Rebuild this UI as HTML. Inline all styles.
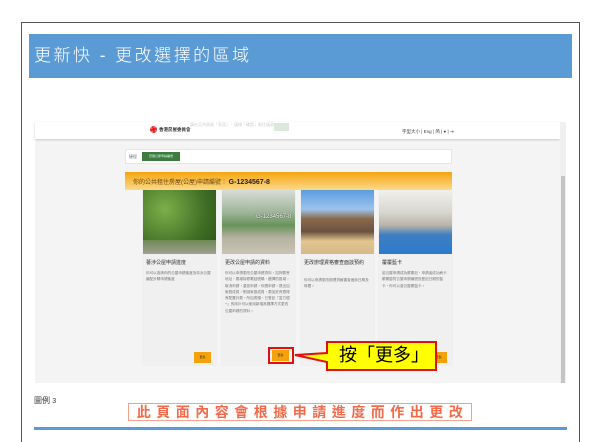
<!DOCTYPE html>
<html><head><meta charset="utf-8"><style>
*{margin:0;padding:0;box-sizing:border-box}
body{width:600px;height:432px;background:#fff;position:relative;overflow:hidden;font-family:"Liberation Sans","Noto Sans CJK TC",sans-serif}
.a{position:absolute}
.t{font-family:"Liberation Sans","Noto Sans CJK TC",sans-serif;white-space:nowrap}
.card{position:absolute;top:190px;width:73px;height:175px;background:#f0f0f0;box-shadow:0 0 1px #ddd}
.img{height:64px;width:100%}
.ct{position:absolute;left:3px;top:70px;font-size:5px;color:#333;width:66px;line-height:7px}
.cb{position:absolute;left:3px;top:80px;font-size:3.6px;color:#777;width:66px;line-height:6.3px}
.btn{position:absolute;width:17px;height:11px;background:#f5a20a;font-size:3px;color:#333;text-align:center;line-height:11px}
</style></head><body>
<div class="a" style="left:21px;top:22px;width:559px;height:420px;border:1px solid #555;border-bottom:none"></div>
<div class="a t" style="left:29px;top:34px;width:543px;height:44px;background:#5b9bd5;color:#fff;font-size:17px;letter-spacing:2.5px;line-height:44px;padding-left:5px;font-weight:300">更新快 - 更改選擇的區域</div>

<div class="a" style="left:35px;top:122px;width:531px;height:261px;background:#f4f4f4"></div>
<div class="a" style="left:35px;top:122px;width:525px;height:17px;background:#fff;box-shadow:0 1px 2px #ccc"></div>
<div class="a" style="left:560px;top:122px;width:6px;height:261px;background:#f0f0f0"></div>
<div class="a" style="left:561px;top:176px;width:4px;height:207px;background:#c4c4c4"></div>
<div class="a" style="left:150px;top:126px;width:7px;height:7px;border-radius:50%;background:#e02020;border:2px dotted #f66"></div>
<div class="a t" style="left:159px;top:127px;font-size:4.5px;color:#333;font-weight:bold">香港房屋委員會</div>
<div class="a t" style="left:190px;top:122px;font-size:4px;color:#ccc">請在公共房屋「家居」、請按「確認」前往填寫。</div>
<div class="a" style="left:274px;top:123px;width:15px;height:8px;background:#dde8dd"></div>
<div class="a t" style="left:402px;top:129px;font-size:4.5px;color:#444">字型大小 | Eng | 简 | <b>●</b> | ⇥</div>
<div class="a" style="left:125px;top:149px;width:327px;height:15px;background:#fff;border:1px solid #e6e6e6"></div>
<div class="a t" style="left:129px;top:154px;font-size:4px;color:#666">捷徑</div>
<div class="a" style="left:142px;top:152px;width:38px;height:9px;background:#3f7a3f;font-size:3px;color:#cfe;text-align:center;line-height:9px">管理公屋申請編號</div>
<div class="a" style="left:125px;top:172px;width:327px;height:18px;background:linear-gradient(#f6a510,#fbd98a)"></div>
<div class="a t" style="left:133px;top:177px;font-size:6px;color:#6b4a10">你的公共租住房屋(公屋)申請編號： <b style="font-size:7px;color:#222">G-1234567-8</b></div>

<div class="card" style="left:143px"><div class="img" style="background:radial-gradient(circle at 30% 30%,#7caf4a,#3f6e25 60%,#2c5018);position:relative"><div class="a" style="left:0;bottom:0;width:100%;height:14px;background:linear-gradient(#6c8a55,#a0a090)"></div></div>
<div class="ct">蕃涉公屋申請進度</div><div class="cb">你可以查詢你的公屋申請進度及待派公屋編配步驟申請進度</div><div class="btn" style="left:51px;top:162px">更多</div></div>
<div class="card" style="left:222px"><div class="img" style="background:linear-gradient(#d9dcd7 0%,#9eb59a 35%,#68935a 55%,#b6b3a4 75%,#c9c3b3);position:relative"><div class="a t" style="left:34px;top:24px;font-size:6px;color:#fff;text-shadow:0 0 1px #000">G-1234567-8</div></div>
<div class="ct">更改公屋申請的資料</div><div class="cb">你可以申請更改公屋申請資料，如押要會地址，要增除修電話號碼，續擇的區域，取消申請，重信申請，你透申請，提出加家庭成員，刪減家庭成員，要加死有適得有配置計劃，所加書譜，已登記「富方優+」的用戶可以使用新增其選擇方式更改公屋申請的資料。</div>
<div class="a" style="left:46px;top:157px;width:26px;height:17px;border:2px solid #e01010"></div><div class="btn" style="left:50px;top:160px">更多</div></div>
<div class="card" style="left:301px"><div class="img" style="background:linear-gradient(#5c9ce0 0%,#9cc4ec 30%,#8a6a4a 45%,#6a5140 65%,#e2c78e 80%,#d5b98a)"></div>
<div class="ct">更改辦理資格審查面談預約</div><div class="cb" style="top:87px">你可以申請更改辦理資格審查面談日期及時間。</div></div>
<div class="card" style="left:379px"><div class="img" style="background:linear-gradient(#f0f0ee 0%,#d8d6d0 35%,#b9b4a8 55%,#3f7fc0 70%,#2b7ad0 100%)"></div>
<div class="ct">覆覆藍卡</div><div class="cb">若公屋申請成功覆覆記，申請者成功刷卡覆覆優質公屋申請編號及登記日期的藍卡，你可以查公屋覆藍卡。</div><div class="btn" style="left:51px;top:162px">更多</div></div>

<svg class="a" style="left:290px;top:340px" width="150" height="32"><polygon points="37,2 146,2 146,30 37,30 37,22 5,15 37,13" fill="#ffff00" stroke="#e01010" stroke-width="2"/></svg>
<div class="a t" style="left:339px;top:342px;font-size:18px;color:#000;line-height:26px">按「更多」</div>

<div class="a t" style="left:34px;top:395px;font-size:8px;color:#333">圖例 <span style="font-size:7px">3</span></div>
<div class="a t" style="left:128px;top:403px;width:344px;height:18px;border:1px solid #f4a08a;color:#f26a4a;font-size:14px;letter-spacing:5.5px;text-align:center;line-height:17px;font-weight:bold;padding-left:5px">此頁面內容會根據申請進度而作出更改</div>
<div class="a" style="left:34px;top:427px;width:533px;height:3px;background:#5b9bd5"></div>
</body></html>
